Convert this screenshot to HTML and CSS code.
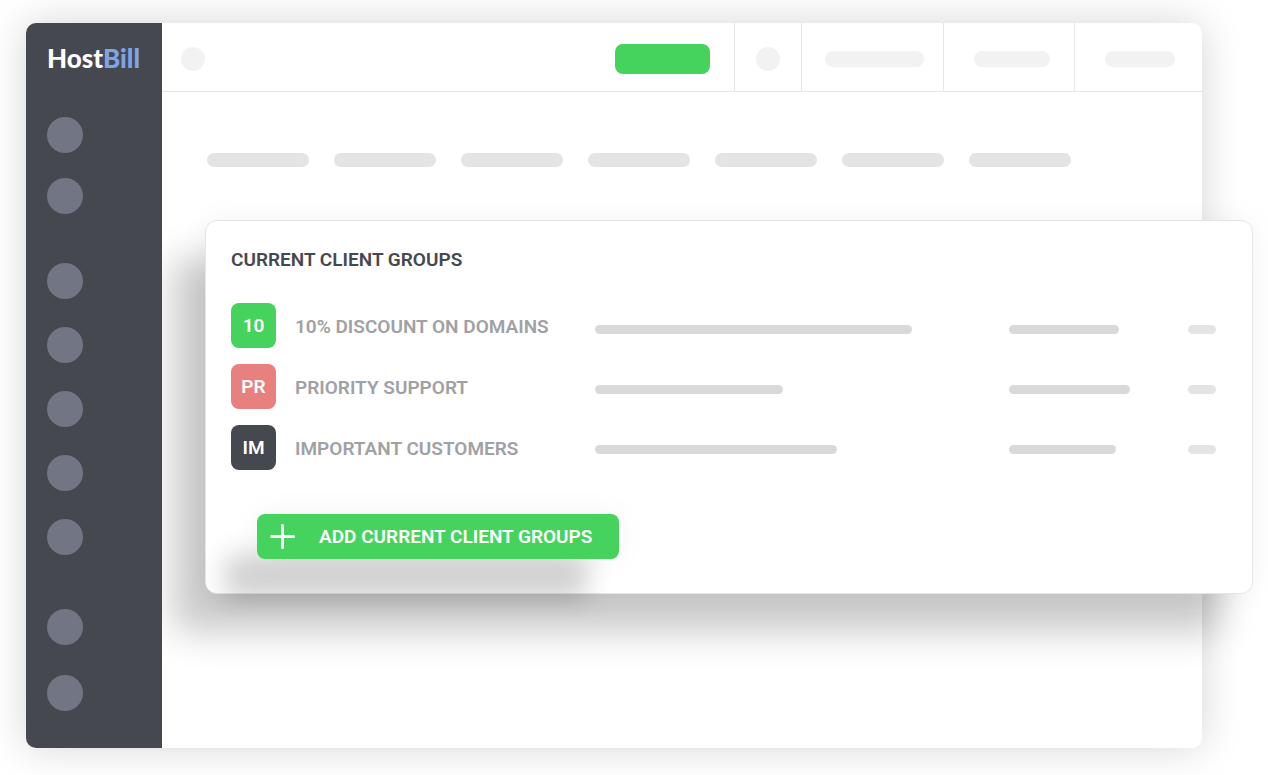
FILE: index.html
```html
<!DOCTYPE html>
<html lang="en">
<head>
<meta charset="utf-8">
<meta name="viewport" content="width=device-width, initial-scale=1">
<title>HostBill – Client groups</title>
<link rel="stylesheet" href="styles.css">
</head>
<body>
<div class="window">
  <aside class="sidebar">
    <div class="logo">Host<span class="logo-accent">Bill</span></div>
    <div class="nav-group"><span class="dot"></span><span class="dot"></span></div>
    <div class="nav-group"><span class="dot"></span><span class="dot"></span><span class="dot"></span><span class="dot"></span><span class="dot"></span></div>
    <div class="nav-group"><span class="dot"></span><span class="dot"></span></div>
  </aside>
  <div class="main">
    <header class="topbar">
      <div class="topbar-start">
        <span class="round"></span>
        <button class="topbar-action" type="button" aria-label="Action"></button>
      </div>
      <div class="cell cell-icon"><span class="round"></span></div>
      <div class="cell cell-wide"><span class="pill pill-wide"></span></div>
      <div class="cell"><span class="pill pill-medium"></span></div>
      <div class="cell cell-last"><span class="pill pill-small"></span></div>
    </header>
    <main class="content">
      <div class="tabs">
        <span class="tab"></span><span class="tab"></span><span class="tab"></span><span class="tab"></span><span class="tab"></span><span class="tab"></span><span class="tab"></span>
      </div>
      <section class="card">
        <h1 class="card-title">CURRENT CLIENT GROUPS</h1>
        <div class="groups">
          <ul class="names">
            <li class="group"><span class="badge badge-green">10</span><span class="name">10% DISCOUNT ON DOMAINS</span></li>
            <li class="group"><span class="badge badge-red">PR</span><span class="name">PRIORITY SUPPORT</span></li>
            <li class="group"><span class="badge badge-dark">IM</span><span class="name">IMPORTANT CUSTOMERS</span></li>
          </ul>
          <div class="bars">
            <span class="bar" style="width:317px"></span>
            <span class="bar" style="width:188px"></span>
            <span class="bar" style="width:242px"></span>
          </div>
          <div class="bars">
            <span class="bar" style="width:110px"></span>
            <span class="bar" style="width:121px"></span>
            <span class="bar" style="width:107px"></span>
          </div>
          <div class="bars">
            <span class="bar bar-light"></span>
            <span class="bar bar-light"></span>
            <span class="bar bar-light"></span>
          </div>
        </div>
        <button class="add" type="button">
          <svg class="plus" viewBox="0 0 25 25" aria-hidden="true"><path d="M12.5 1.5v22M1.5 12.5h22" fill="none" stroke="currentColor" stroke-width="3" stroke-linecap="round"/></svg>
          ADD CURRENT CLIENT GROUPS
        </button>
      </section>
    </main>
  </div>
</div>
</body>
</html>
```
FILE: styles.css
```css
* { box-sizing: border-box; }

body {
  margin: 0;
  padding: 23px 66px 27px 26px;
  min-height: 100vh;
  display: flex;
  background: #fff;
  font-family: Roboto, "Liberation Sans", sans-serif;
  font-size: 19px;
  line-height: 24px;
  font-weight: 600;
  color: #464850;
}

.window {
  flex: 1;
  display: flex;
  background: #fff;
  border-radius: 10px;
  box-shadow: 0 0 40px rgba(0, 0, 0, 0.17);
}

.sidebar {
  position: relative;
  z-index: 1;
  flex: 0 0 136px;
  display: flex;
  flex-direction: column;
  gap: 49px;
  padding: 20px 21px 37px;
  background: #464850;
  border-radius: 10px 0 0 10px;
}

.logo {
  font-family: Lato, "Open Sans", sans-serif;
  font-size: 26px;
  line-height: 30px;
  font-weight: 900;
  color: #fff;
  margin-bottom: -5px;
}

.logo-accent { color: #7fa5e6; }

.nav-group {
  display: flex;
  flex-direction: column;
  gap: 28px;
}

.nav-group:nth-child(2) { gap: 25px; }
.nav-group:last-child { gap: 30px; margin-top: 5px; }

.dot {
  width: 36px;
  height: 36px;
  border-radius: 50%;
  background: #727583;
}

.main {
  flex: 1;
  min-width: 0;
}

.topbar {
  display: flex;
  height: 69px;
  border-bottom: 1px solid #e6e6e6;
}

.topbar-start {
  flex: 1;
  display: flex;
  align-items: center;
  justify-content: space-between;
  padding: 4px 24px 0 19px;
}

.round {
  width: 24px;
  height: 24px;
  border-radius: 50%;
  background: #f2f2f2;
}

.topbar-action {
  width: 95px;
  height: 30px;
  padding: 0;
  border: 0;
  border-radius: 8px;
  background: #45d35d;
}

.cell {
  display: flex;
  align-items: center;
  padding: 4px 24px 0 30px;
  border-left: 1px solid #e6e6e6;
}

.cell-icon { padding: 4px 21px 0; }
.cell-wide { padding: 4px 19px 0 23px; }
.cell-last { padding-right: 27px; }

.pill {
  height: 16px;
  border-radius: 8px;
  background: #f2f2f2;
}

.pill-wide { width: 99px; }
.pill-medium { width: 76px; }
.pill-small { width: 70px; }

.content { padding: 61px 0 0 44px; }

.tabs {
  display: flex;
  gap: 25px;
  padding-left: 1px;
}

.tab {
  width: 102px;
  height: 14px;
  border-radius: 7px;
  background: #e4e4e4;
}

.card {
  margin: 53px -51px 0 -1px;
  padding: 27px 36px 34px 25px;
  background: #fff;
  border: 1px solid #e6e6e6;
  border-radius: 12px;
  box-shadow: -32px 38px 36px rgba(0, 0, 0, 0.21), 0 0 30px rgba(0, 0, 0, 0.05);
}

.card-title {
  margin: 0 0 31px;
  font-size: 19px;
  line-height: 24px;
  font-weight: 600;
}

.groups {
  display: grid;
  grid-template-columns: 364px 1fr 179px 28px;
}

.names {
  display: flex;
  flex-direction: column;
  gap: 16px;
  margin: 0;
  padding: 0;
  list-style: none;
}

.group {
  display: flex;
  align-items: center;
  gap: 19px;
  color: #a0a1a4;
}

.name { padding-top: 3px; }

.badge {
  display: flex;
  align-items: center;
  justify-content: center;
  width: 45px;
  height: 45px;
  border-radius: 8px;
  color: #fff;
}

.badge-green { background: #45d35d; }
.badge-red { background: #e88080; }
.badge-dark { background: #464850; }

.bars {
  display: flex;
  flex-direction: column;
  gap: 51px;
  padding-top: 22px;
}

.bar {
  height: 9px;
  border-radius: 5px;
  background: #d9d9d9;
}

.bar-light { background: #e4e4e4; }

.add {
  display: flex;
  align-items: center;
  gap: 24px;
  height: 45px;
  margin: 44px 0 0 26px;
  padding: 0 27px 0 13px;
  border: 0;
  border-radius: 8px;
  background: #45d35d;
  color: #fff;
  font: inherit;
  white-space: nowrap;
  box-shadow: -32px 40px 26px rgba(0, 0, 0, 0.18), 0 0 30px rgba(0, 0, 0, 0.05);
}

.plus {
  width: 25px;
  height: 25px;
}
```
